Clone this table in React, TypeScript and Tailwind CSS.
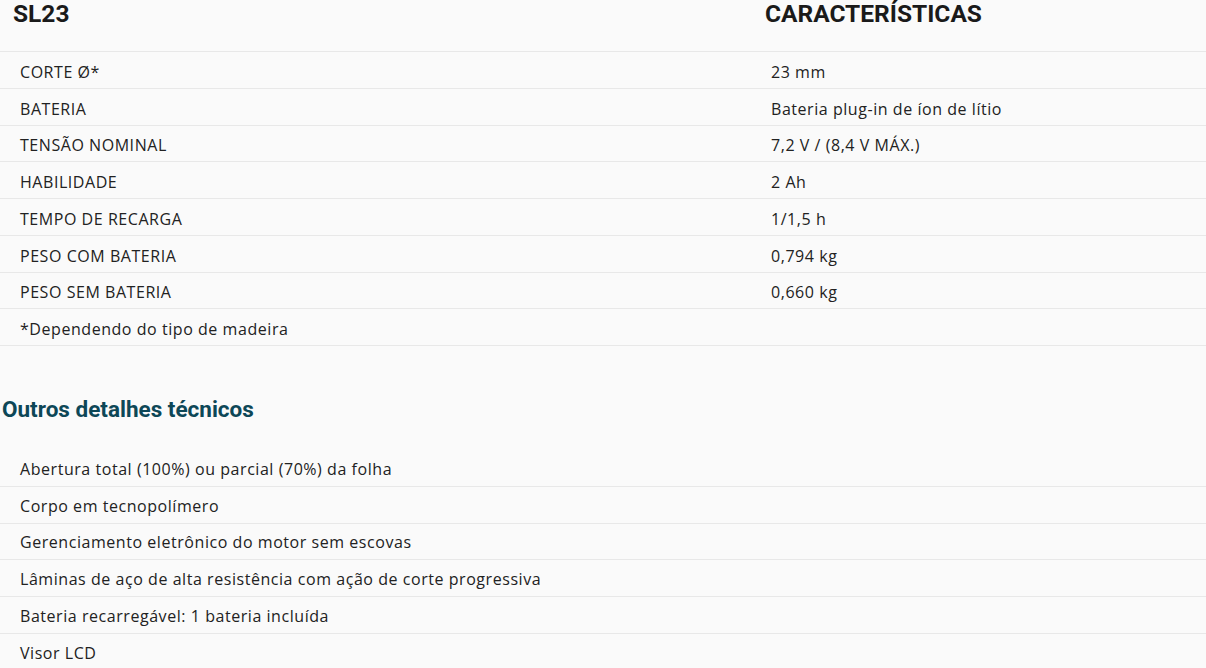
import React from "react";

const specs = [
  ["CORTE Ø*", "23 mm"],
  ["BATERIA", "Bateria plug-in de íon de lítio"],
  ["TENSÃO NOMINAL", "7,2 V / (8,4 V MÁX.)"],
  ["HABILIDADE", "2 Ah"],
  ["TEMPO DE RECARGA", "1/1,5 h"],
  ["PESO COM BATERIA", "0,794 kg"],
  ["PESO SEM BATERIA", "0,660 kg"],
  ["*Dependendo do tipo de madeira", ""],
];

const details = [
  "Abertura total (100%) ou parcial (70%) da folha",
  "Corpo em tecnopolímero",
  "Gerenciamento eletrônico do motor sem escovas",
  "Lâminas de aço de alta resistência com ação de corte progressiva",
  "Bateria recarregável: 1 bateria incluída",
  "Visor LCD",
];

export default function App() {
  return (
    <div className="min-h-[668px] w-[1206px] overflow-hidden bg-[#fafafa] font-['Open_Sans',sans-serif] text-[16px] tracking-[0.55px] text-[#222]">
      <div className="flex h-[52px] items-start border-b border-[#e8e8e8] tracking-normal">
        <h3 className="w-[751px] pl-[13px] font-['Roboto',sans-serif] text-[24.5px] leading-[28px] font-bold text-[#1a1a1a]">
          SL23
        </h3>
        <h3 className="pl-[14px] font-['Roboto',sans-serif] text-[24.5px] leading-[28px] font-bold text-[#1a1a1a]">
          CARACTERÍSTICAS
        </h3>
      </div>
      {specs.map(([label, value], idx) => (
        <div key={idx} className="flex h-[36.75px] items-center border-b border-[#e8e8e8] pt-[4px]">
          <div className="w-[751px] pl-[20px]">{label}</div>
          <div className="pl-[20px]">{value}</div>
        </div>
      ))}

      <h4 className="mt-[47px] h-[57px] pl-[2px] font-['Roboto',sans-serif] text-[22.5px] font-bold tracking-normal text-[#0d4757]">
        Outros detalhes técnicos
      </h4>

      <div className="flex flex-col">
        {details.map((item, idx) => (
          <div key={idx} className="flex h-[36.75px] items-center border-b border-[#e8e8e8] pl-[20px] pt-[2px] last:border-b-0">
            {item}
          </div>
        ))}
      </div>
    </div>
  );
}
